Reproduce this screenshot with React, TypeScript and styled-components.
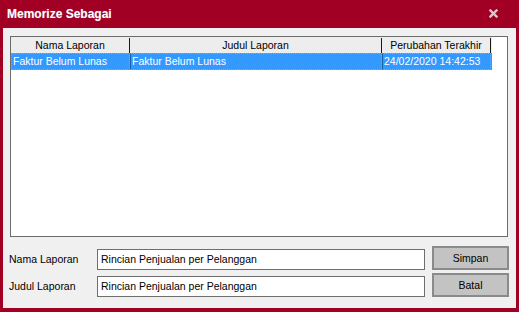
import React from "react";
import styled, { createGlobalStyle } from "styled-components";

const Global = createGlobalStyle`
  html, body { margin: 0; padding: 0; background: #a10024; }
  body { font-family: "Liberation Sans", Arial, sans-serif; font-size: 10.5px; }
`;

const Window = styled.div`
  width: 519px;
  height: 312px;
  box-sizing: border-box;
  background: #a10024;
  display: flex;
  flex-direction: column;
  padding: 0 3px 4px 3px;
`;

const TitleBar = styled.div`
  height: 28px;
  flex: none;
  display: flex;
  align-items: center;
  justify-content: space-between;
  padding: 0 18px 0 4px;
`;

const Title = styled.div`
  color: #ffffff;
  font-family: "Liberation Sans", Arial, sans-serif;
  font-weight: bold;
  font-size: 12px;
  text-shadow: 0 0 1px rgba(255, 255, 255, 0.3);
`;

const CloseBtn = styled.div`
  width: 9px;
  height: 9px;
  display: flex;
  margin-top: -1px;
`;

const Body = styled.div`
  flex: 1;
  background: #f0f0f0;
  padding: 8px 8px 11px 7px;
  display: flex;
  flex-direction: column;
  gap: 9px;
`;

const ListBox = styled.div`
  height: 201px;
  box-sizing: border-box;
  border: 1px solid #6b6b6b;
  background: #ffffff;
  display: flex;
  flex-direction: column;
`;

const Cols = "119px 252px 109px";

const HeaderRow = styled.div`
  display: grid;
  grid-template-columns: ${Cols};
  height: 16px;
  background: #ededed;
  width: 481px;
`;

const HeaderCell = styled.div`
  border-right: 1px solid #1a1a1a;
  text-align: center;
  color: #000;
  white-space: nowrap;
  overflow: hidden;
  margin-top: 1px;
  height: 15px;
  line-height: 15px;
`;

const DataRow = styled.div<{ $selected?: boolean }>`
  display: grid;
  grid-template-columns: ${Cols};
  height: 17px;
  width: 481px;
  background: ${(p) => (p.$selected ? "#3399ff" : "transparent")};
  color: ${(p) => (p.$selected ? "#ffffff" : "#000")};
`;

const DataCell = styled.div`
  box-sizing: border-box;
  border: 1px dotted #e8943a;
  border-left-style: solid;
  border-left-color: #1e5fa0;
  padding-left: 1px;
  line-height: 15px;
  white-space: nowrap;
  overflow: hidden;
  &:first-child {
    border-left: 1px dotted #e8943a;
  }
`;

const Form = styled.div`
  display: grid;
  grid-template-columns: 80px 328px 77px;
  column-gap: 7px;
  row-gap: 3px;
  grid-auto-rows: 24px;
`;

const Label = styled.div`
  align-self: end;
  height: 21px;
  line-height: 21px;
  margin-left: -1px;
  color: #000;
  white-space: nowrap;
`;

const TextBox = styled.div`
  align-self: end;
  height: 21px;
  box-sizing: border-box;
  border: 1px solid #6e6e6e;
  background: #fff;
  padding-left: 3px;
  line-height: 19px;
  color: #000;
  white-space: nowrap;
`;

const Button = styled.div`
  box-sizing: border-box;
  border: 2px solid #8a8a8a;
  background: #c3c3c3;
  color: #000;
  display: flex;
  align-items: center;
  justify-content: center;
`;

const columns = ["Nama Laporan", "Judul Laporan", "Perubahan Terakhir"];
const rows = [["Faktur Belum Lunas", "Faktur Belum Lunas", "24/02/2020 14:42:53"]];

export default function App() {
  return (
    <>
      <Global />
      <Window>
        <TitleBar>
          <Title>Memorize Sebagai</Title>
          <CloseBtn>
            <svg width="9" height="9" viewBox="0 0 9 9">
              <path d="M1.5 1.5 L7.5 7.5 M7.5 1.5 L1.5 7.5" stroke="#cfcfcf" strokeWidth="2.4" strokeLinecap="square" />
            </svg>
          </CloseBtn>
        </TitleBar>
        <Body>
          <ListBox>
            <HeaderRow>
              {columns.map((c) => (
                <HeaderCell key={c}>{c}</HeaderCell>
              ))}
            </HeaderRow>
            {rows.map((r, i) => (
              <DataRow key={i} $selected>
                {r.map((v, j) => (
                  <DataCell key={j}>{v}</DataCell>
                ))}
              </DataRow>
            ))}
          </ListBox>
          <Form>
            <Label>Nama Laporan</Label>
            <TextBox>Rincian Penjualan per Pelanggan</TextBox>
            <Button>Simpan</Button>
            <Label>Judul Laporan</Label>
            <TextBox>Rincian Penjualan per Pelanggan</TextBox>
            <Button>Batal</Button>
          </Form>
        </Body>
      </Window>
    </>
  );
}
